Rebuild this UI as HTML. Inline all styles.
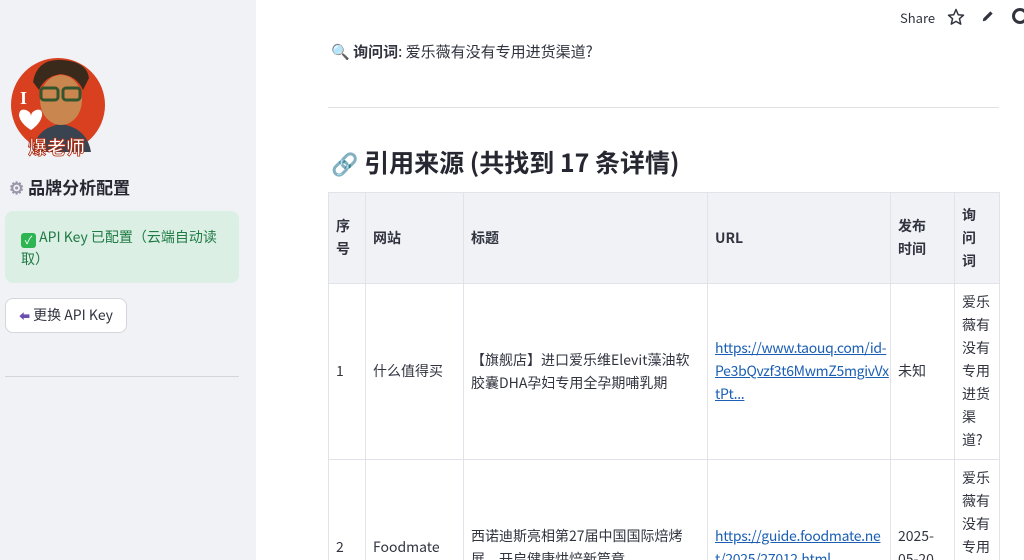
<!DOCTYPE html>
<html><head><meta charset="utf-8"><style>
*{margin:0;padding:0;box-sizing:border-box}
html,body{width:1024px;height:560px;overflow:hidden}
body{background:#fff;font-family:"Noto Sans CJK SC","Liberation Sans",sans-serif;color:#31333f;position:relative}
.sb{position:absolute;left:0;top:0;width:256px;height:560px;background:#f0f2f6}
.abs{position:absolute}
.clip{position:absolute;left:0;top:0;width:1024px;height:560px;overflow:hidden}
table{border-collapse:collapse;table-layout:fixed;width:671px;position:absolute;left:328px;top:192px;font-size:14px;line-height:23px}
td,th{border:1px solid #e1e3e8;padding:0 7px;vertical-align:middle;text-align:left;overflow:hidden}
th{background:#f0f2f6;font-weight:bold;height:91px}
td{height:176px}
a{color:#1a5fb4;text-decoration:underline;white-space:nowrap;letter-spacing:-0.3px}
</style></head><body>
<div class="clip">
<div class="sb">
  <svg class="abs" style="left:11px;top:58px" width="96" height="100" viewBox="0 0 96 100">
    <circle cx="47" cy="47" r="47" fill="#d8401f"/>
    <path d="M22 94 Q24 70 50 66 Q76 70 80 94Z" fill="#3a4450"/>
    <ellipse cx="50" cy="42" rx="21" ry="25" fill="#c9874f"/>
    <path d="M22 24 Q26 0 52 2 Q76 4 78 20 L72 32 Q66 18 50 16 Q34 18 28 32Z" fill="#3a2a1c"/>
    <rect x="30" y="30" width="17" height="12" rx="3" fill="none" stroke="#35552e" stroke-width="3"/>
    <rect x="52" y="30" width="17" height="12" rx="3" fill="none" stroke="#35552e" stroke-width="3"/>
    <text x="9" y="46" font-size="18" font-weight="bold" fill="#fff" font-family="Liberation Serif">I</text>
    <path d="M8 58 Q8 50 15 52 Q20 54 20 58 Q20 54 25 52 Q32 50 31 58 Q29 66 20 72 Q10 66 8 58Z" fill="#fff"/>
    <text x="17" y="96" font-size="19" font-weight="bold" fill="#fff" stroke="#b02a10" stroke-width="0.8" font-family="Noto Sans CJK SC">爆老师</text>
  </svg>
  <div class="abs" style="left:9px;top:174px;font-size:17px;font-weight:bold;color:#262730"><span style="color:#9a95a8">⚙</span> 品牌分析配置</div>
  <div class="abs" style="left:5px;top:211px;width:234px;height:72px;background:#dbefe5;border-radius:8px;color:#1f7a43;font-size:14px;line-height:22px;padding:15px 10px 0 16px"><span style="display:inline-block;width:15px;height:15px;background:#2db552;border-radius:3px;color:#fff;font-size:11px;text-align:center;line-height:15px;vertical-align:-2px">✓</span> API Key 已配置（云端自动读取）</div>
  <div class="abs" style="left:5px;top:298px;width:122px;height:35px;background:#fff;border:1px solid #d5d6db;border-radius:8px;font-size:14px;line-height:33px;padding-left:13px"><span style="color:#6a4fb0;font-size:11px">⬅</span> 更换 API Key</div>
  <div class="abs" style="left:5px;top:376px;width:234px;height:1px;background:#d3d5da"></div>
</div>
<div class="abs" style="left:900px;top:8px;font-size:13px;color:#31333f">Share</div>
<svg class="abs" style="left:947px;top:8px" width="18" height="18" viewBox="0 0 24 24"><path d="M12 2l3 7 7 .6-5.4 4.7 1.7 7.2L12 17.8 5.7 21.5l1.7-7.2L2 9.6 9 9z" fill="none" stroke="#31333f" stroke-width="2" stroke-linejoin="round"/></svg>
<svg class="abs" style="left:981px;top:9px" width="14" height="14" viewBox="0 0 24 24"><path d="M3 21l1-5L16 4l4 4L8 20z" fill="#31333f"/></svg>
<div class="abs" style="left:1012px;top:8px;width:16px;height:16px;border:3px solid #31333f;border-radius:50%"></div>
<div class="abs" style="left:331px;top:41px;font-size:15px"><span style="color:#4060c0">🔍</span> <b>询问词</b>: 爱乐薇有没有专用进货渠道?</div>
<div class="abs" style="left:328px;top:107px;width:671px;height:1px;background:#e0e1e5"></div>
<div class="abs" style="left:331px;top:144px;font-size:25px;font-weight:bold;color:#262730"><span style="color:#999;font-size:22px">🔗</span> 引用来源 (共找到 17 条详情)</div>
<table>
<colgroup><col style="width:37px"><col style="width:98px"><col style="width:244px"><col style="width:183px"><col style="width:64px"><col style="width:45px"></colgroup>
<tr><th>序<br>号</th><th>网站</th><th>标题</th><th>URL</th><th>发布<br>时间</th><th>询<br>问<br>词</th></tr>
<tr><td>1</td><td>什么值得买</td><td>【旗舰店】进口爱乐维Elevit藻油软<br>胶囊DHA孕妇专用全孕期哺乳期</td><td><a>https://www.taouq.com/id-</a><br><a>Pe3bQvzf3t6MwmZ5mgivVx</a><br><a>tPt...</a></td><td>未知</td><td>爱乐<br>薇有<br>没有<br>专用<br>进货<br>渠<br>道?</td></tr>
<tr><td>2</td><td>Foodmate</td><td>西诺迪斯亮相第27届中国国际焙烤<br>展，开启健康烘焙新篇章</td><td><a>https://guide.foodmate.ne</a><br><a>t/2025/27012.html</a></td><td>2025-<br>05-20</td><td>爱乐<br>薇有<br>没有<br>专用<br>进货<br>渠<br>道?</td></tr>
</table>
</div>
</body></html>
